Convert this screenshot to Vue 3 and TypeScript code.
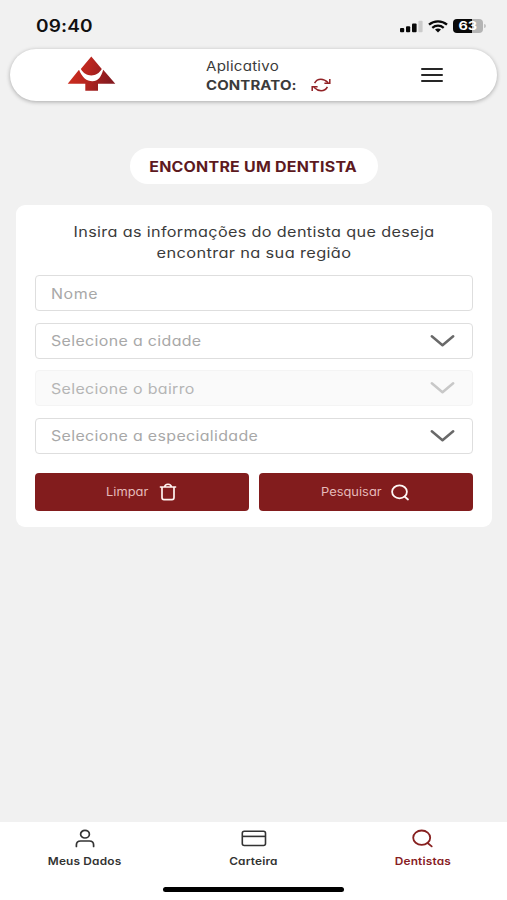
<script setup lang="ts">
import { ref } from 'vue'

interface SelectField {
  key: string
  label: string
  disabled: boolean
}

const fields: SelectField[] = [
  { key: 'cidade', label: 'Selecione a cidade', disabled: false },
  { key: 'bairro', label: 'Selecione o bairro', disabled: true },
  { key: 'especialidade', label: 'Selecione a especialidade', disabled: false },
]

const nome = ref('')
const activeTab = ref('dentistas')
</script>

<template>
  <div class="app">
    <div class="status">
      <span class="time">09:40</span>
      <div class="indicators">
        <svg width="23" height="13" viewBox="0 0 23 13" fill="#080808">
          <rect x="0" y="8" width="4.2" height="4.2" rx="1" />
          <rect x="6" y="6.2" width="4.2" height="6" rx="1" />
          <rect x="12" y="3.4" width="4.6" height="8.8" rx="1" />
          <rect x="18.4" y="0.8" width="4.2" height="11.4" rx="1" fill="#cbcbcb" />
        </svg>
        <svg class="wifi" width="20" height="13" viewBox="0 0 20 13" fill="none" stroke="#080808" stroke-width="2.3">
          <path d="M1 4.6C6 .2 14 .2 19 4.6" />
          <path d="M4.3 7.8C7.6 5 12.4 5 15.7 7.8" />
          <path d="M7 9.6Q10 7.5 13 9.6L10 12.4Z" fill="#080808" stroke="none" />
        </svg>
        <div class="battery"><span class="level">63</span></div>
        <i class="battery-tip"></i>
      </div>
    </div>

    <header class="header">
      <svg class="logo" width="49" height="36" viewBox="0 0 49 36">
        <defs>
          <linearGradient id="leaf" x1="0" y1="0" x2="1" y2="0.25">
            <stop offset="0" stop-color="#d5301d" />
            <stop offset="0.5" stop-color="#b9251f" />
            <stop offset="1" stop-color="#861a20" />
          </linearGradient>
        </defs>
        <path
          fill="url(#leaf)"
          d="M24.3 .5L34.8 13C32.2 17.4 28.7 19.4 24.3 19.4S16.4 17.4 13.8 13ZM12 13.8C15.2 21.5 19.5 25.3 25.4 25.3C31 25.3 34.2 21 36.2 13.8L48.3 27.7H31V34.7H18.3V27.7H.7Z"
        />
      </svg>
      <div class="contract">
        <span class="app-name">Aplicativo</span>
        <div class="contract-row">
          <strong><span class="contract-label">CONTRATO:</span></strong>
          <svg width="20" height="15" viewBox="0 0 20 15" fill="none" stroke="#912226" stroke-width="1.5">
            <path d="M3.6 5.2C5 2.4 7 1.3 9.9 1.3C12.8 1.3 14.8 2.5 17.2 4.8" />
            <path d="M18.8 1V5.3H13.4" />
            <path d="M16.4 8.8C15 11.6 13 12.7 10.1 12.7C7.2 12.7 5.2 11.5 2.8 9.2" />
            <path d="M1.2 13V8.7H6.6" />
          </svg>
        </div>
      </div>
      <button class="menu" aria-label="Menu"><i></i><i></i><i></i></button>
    </header>

    <main class="content">
      <h1 class="title"><span>ENCONTRE UM DENTISTA</span></h1>
      <section class="card">
        <p class="intro">
          <span class="line-one">Insira as informações do dentista que deseja</span>
          <span class="line-two">encontrar na sua região</span>
        </p>
        <form class="form" @submit.prevent>
          <div class="field">
            <input v-model="nome" placeholder="Nome" />
          </div>
          <div v-for="field in fields" :key="field.key" class="field" :class="{ disabled: field.disabled }">
            <span>{{ field.label }}</span>
            <svg width="25" height="14" viewBox="0 0 25 14" fill="none">
              <path d="M1.8 2.2L12.5 11.2L23.2 2.2" stroke="currentColor" stroke-width="2.5" stroke-linecap="round" stroke-linejoin="round" />
            </svg>
          </div>
          <div class="actions">
            <button type="reset" class="action">
              <span class="limpar">Limpar</span>
              <svg width="18" height="18" viewBox="0 0 18 18" fill="none" stroke="#fff2ef" stroke-width="1.7" stroke-linejoin="round">
                <path d="M.8 4H17.2M3 4V14.4Q3 16.6 5 16.6H13Q15 16.6 15 14.4V4M5.6 4C6 .3 12 .3 12.4 4" />
              </svg>
            </button>
            <button type="submit" class="action">
              <span class="pesquisar">Pesquisar</span>
              <svg width="19" height="17" viewBox="0 0 19 17" fill="none" stroke="#fff8f6" stroke-width="1.8" stroke-linecap="round">
                <ellipse cx="8.5" cy="7.8" rx="7.4" ry="6.5" />
                <path d="M13.6 12.5L17 15.5" />
              </svg>
            </button>
          </div>
        </form>
      </section>
    </main>

    <footer class="bottom">
      <nav class="tabs">
        <a class="tab" :class="{ active: activeTab === 'dados' }" @click="activeTab = 'dados'">
          <svg width="22" height="20" viewBox="0 0 22 20" fill="none" stroke="currentColor" stroke-width="1.7" stroke-linecap="round">
            <ellipse cx="11" cy="5.2" rx="4.4" ry="3.8" />
            <path d="M2.4 17.4V16Q2.4 12 6.6 12H15.4Q19.6 12 19.6 16V17.4" />
          </svg>
          <span>Meus Dados</span>
        </a>
        <a class="tab" :class="{ active: activeTab === 'carteira' }" @click="activeTab = 'carteira'">
          <svg width="26" height="20" viewBox="0 0 26 20" fill="none" stroke="currentColor" stroke-width="1.6">
            <rect x="1.3" y="2.3" width="23.2" height="14.2" rx="2" />
            <path d="M1.3 7.4H24.5" />
          </svg>
          <span>Carteira</span>
        </a>
        <a class="tab" :class="{ active: activeTab === 'dentistas' }" @click="activeTab = 'dentistas'">
          <svg width="22" height="20" viewBox="0 0 22 20" fill="none" stroke="currentColor" stroke-width="1.8" stroke-linecap="round">
            <ellipse cx="9.7" cy="8.7" rx="8.5" ry="7.2" />
            <path d="M15.6 14L19.7 17.4" />
          </svg>
          <span>Dentistas</span>
        </a>
      </nav>
      <div class="home-indicator"></div>
    </footer>
  </div>
</template>

<style>
body {
  background: #f1f1f1;
}
</style>

<style scoped>
.app {
  display: flex;
  flex-direction: column;
  box-sizing: border-box;
  width: 507px;
  height: 900px;
  overflow: hidden;
  background: #f1f1f1;
  color: #3b3b3b;
  font-family: Inter, 'Open Sans', sans-serif;
  font-feature-settings: 'cv11' 1;
}
button,
input {
  font: inherit;
  font-feature-settings: inherit;
  border: 0;
  padding: 0;
}
span {
  display: block;
  white-space: nowrap;
}
.status {
  display: flex;
  justify-content: space-between;
  height: 49px;
  padding: 0 21px 0 36px;
  box-sizing: border-box;
}
.time {
  padding-top: 16px;
  color: #101010;
  font-size: 17px;
  font-weight: 600;
  line-height: 20px;
  letter-spacing: 0.1px;
  transform: scaleX(1.12);
  transform-origin: left;
}
.indicators {
  display: flex;
  align-items: center;
  height: 20px;
  padding-top: 16px;
}
.wifi {
  margin: 0 5px;
}
.battery {
  display: flex;
  align-items: center;
  justify-content: center;
  width: 30px;
  height: 14px;
  border-radius: 4px;
  background: linear-gradient(90deg, #080808 63%, #b4b4b4 63%);
  color: #fff;
}
.level {
  font-size: 12px;
  font-weight: 700;
  line-height: 14px;
  transform: scaleX(1.2);
}
.battery-tip {
  width: 2px;
  height: 4px;
  margin-left: 1px;
  border-radius: 0 2px 2px 0;
  background: #c3c3c3;
}
.header {
  display: flex;
  align-items: center;
  flex-shrink: 0;
  height: 52px;
  margin: 0 10px;
  padding: 0 54px 0 57px;
  box-sizing: border-box;
  border-radius: 26px;
  background: #fff;
  box-shadow: 0 1px 4px rgba(0, 0, 0, 0.3);
}
.logo {
  margin-bottom: 3px;
}
.contract {
  margin-left: 90px;
  padding-top: 1px;
  font-size: 13px;
  line-height: 19px;
}
.app-name {
  letter-spacing: 0.2px;
  transform: scaleX(1.16);
  transform-origin: left;
}
.contract-row {
  display: flex;
  align-items: center;
}
.contract-row strong {
  width: 105px;
  font-weight: 700;
}
.contract-label {
  letter-spacing: 0.1px;
  transform: scaleX(1.15);
  transform-origin: left;
  width: 80px;
}
.menu {
  display: flex;
  flex-direction: column;
  gap: 4px;
  margin-left: auto;
  background: none;
}
.menu i {
  width: 22px;
  height: 2px;
  border-radius: 1px;
  background: #262626;
}
.content {
  display: flex;
  flex: 1;
  flex-direction: column;
  align-items: center;
  padding-top: 47px;
}
.title {
  display: flex;
  align-items: center;
  justify-content: center;
  width: 248px;
  height: 36px;
  margin: 0 0 21px;
  border-radius: 18px;
  background: #fff;
  color: #5d191e;
  font-size: 14px;
  font-weight: 700;
  letter-spacing: 0.2px;
}
.title span {
  transform: scaleX(1.14);
}
.card {
  width: 476px;
  height: 322px;
  padding: 16px 19px;
  box-sizing: border-box;
  border-radius: 9px;
  background: #fff;
}
.intro {
  margin: 0 0 12px;
  font-size: 14px;
  line-height: 21px;
  letter-spacing: 0.3px;
  text-align: center;
}
.line-one {
  transform: scaleX(1.157);
}
.line-two {
  transform: scaleX(1.17);
}
.form {
  display: flex;
  flex-direction: column;
  gap: 11.6px;
}
.field {
  display: flex;
  align-items: center;
  justify-content: space-between;
  width: 438px;
  height: 36px;
  padding: 0 17px 0 15px;
  box-sizing: border-box;
  border: 1px solid #dedede;
  border-radius: 4px;
  background: #fff;
  color: #a8a8a8;
  font-size: 14px;
  letter-spacing: 0.3px;
}
.field span,
.field input {
  transform: scaleX(1.14);
  transform-origin: left;
}
.field input {
  width: 340px;
  background: transparent;
  letter-spacing: 0.5px;
  outline: 0;
}
.field input::placeholder {
  color: #a8a8a8;
  opacity: 1;
}
.field svg {
  color: #696969;
}
.field.disabled {
  border-color: #f4f4f4;
  background: #fafafa;
  color: #b5b5b5;
}
.field.disabled svg {
  color: #c8c8c8;
}
.actions {
  display: flex;
  gap: 10px;
  padding-top: 8px;
}
.action {
  display: flex;
  align-items: center;
  justify-content: center;
  gap: 10px;
  flex: 1;
  height: 38px;
  border-radius: 4px;
  background: #821c1d;
  color: #e5bab9;
  font-size: 11.5px;
  text-align: left;
}
.limpar,
.pesquisar {
  transform: scaleX(1.12);
  transform-origin: left;
}
.limpar {
  width: 43px;
}
.pesquisar {
  width: 60px;
}
.bottom {
  display: flex;
  flex-direction: column;
  align-items: center;
  flex-shrink: 0;
  height: 78px;
  background: #fff;
}
.tabs {
  display: grid;
  grid-template-columns: repeat(3, 169px);
  height: 65px;
}
.tab {
  display: flex;
  flex-direction: column;
  align-items: center;
  gap: 6px;
  padding-top: 7px;
  color: #333;
  font-size: 10.5px;
  font-weight: 600;
  line-height: 13px;
  letter-spacing: 0.15px;
}
.tab span {
  transform: scaleX(1.13);
}
.tab.active {
  color: #87201f;
}
.home-indicator {
  width: 181px;
  height: 5px;
  border-radius: 3px;
  background: #000;
}
</style>
